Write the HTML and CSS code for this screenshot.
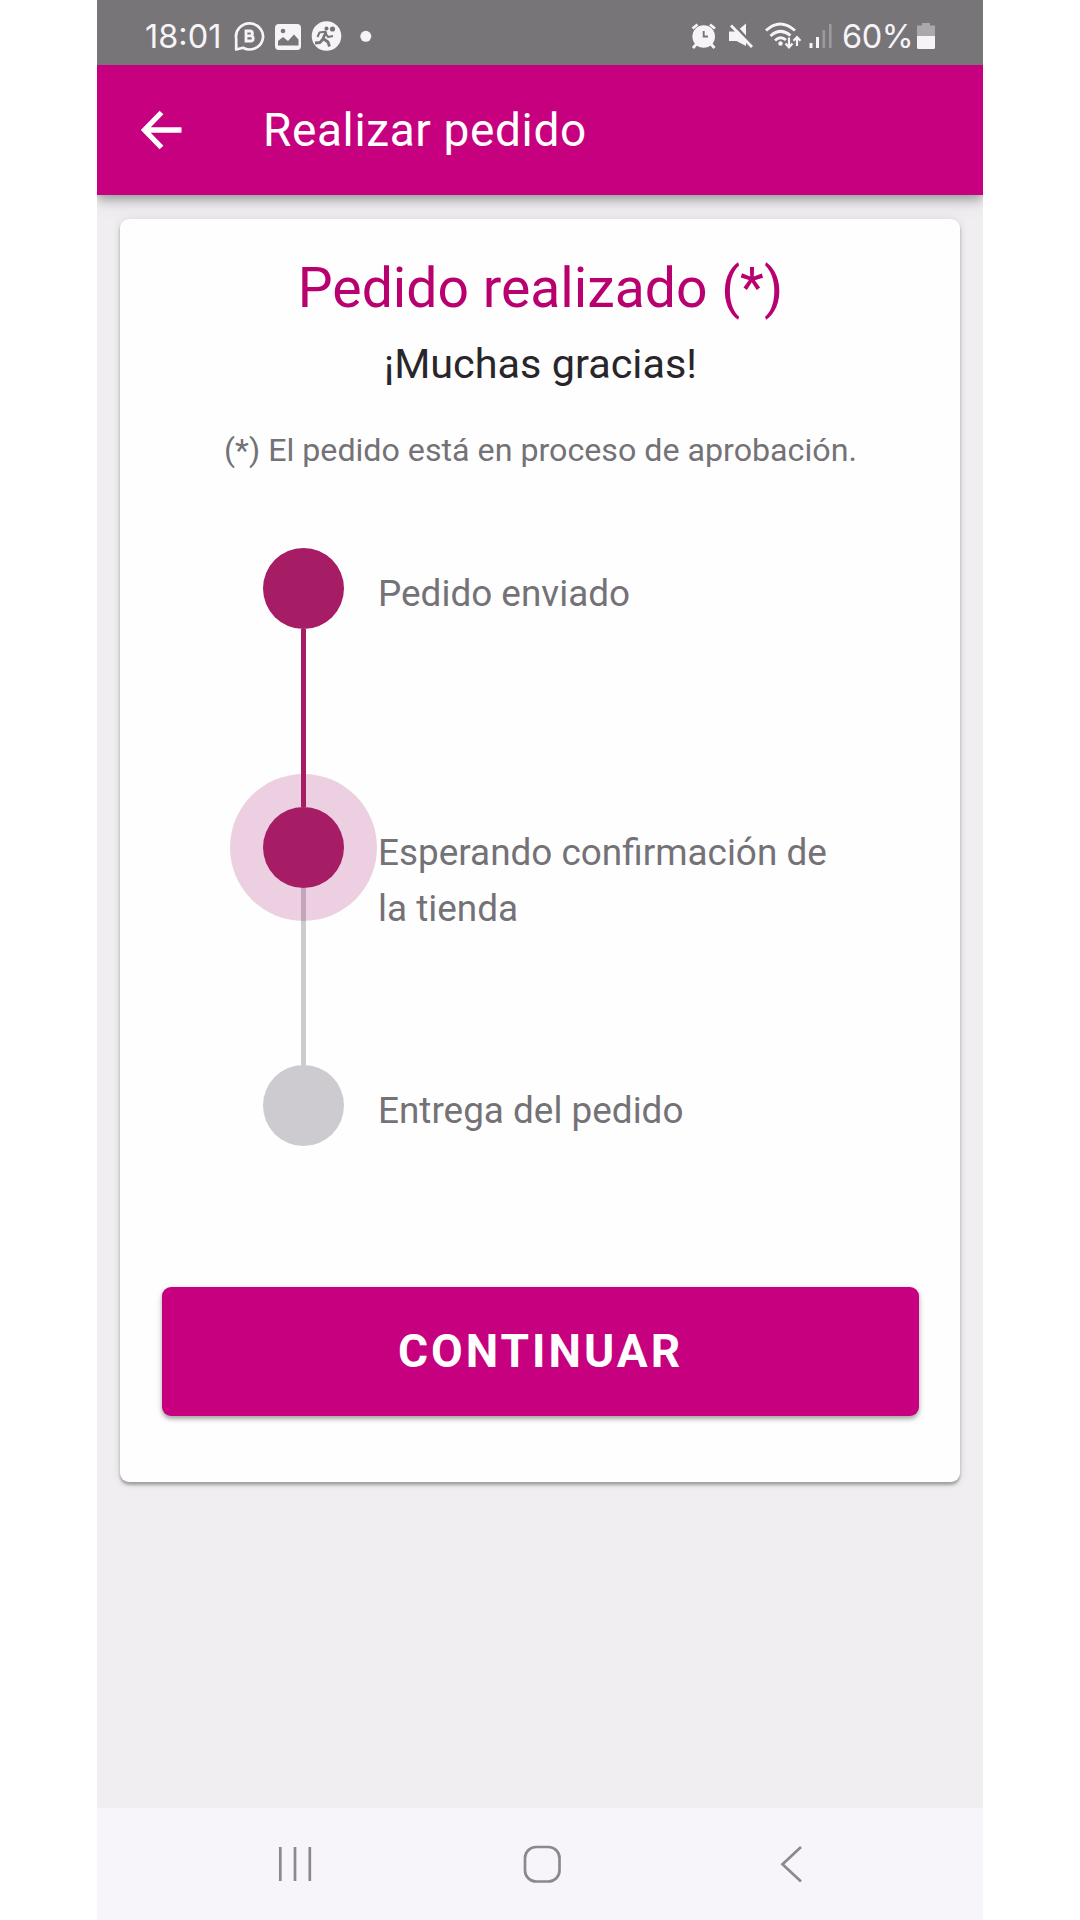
FILE: index.html
```html
<!DOCTYPE html>
<html lang="es">
<head>
<meta charset="utf-8">
<title>Realizar pedido</title>
<link rel="stylesheet" href="styles.css">
</head>
<body>
<div class="phone">
  <div class="status-bar">
    <span class="clock">18:01</span>
    <svg class="status-left" width="140" height="34" viewBox="232 19 140 34" fill="none">
      <path d="M236.200 49.500V38.500A13.500 13 0 1 1 243 47.800Z" stroke="#f6f4f7" stroke-width="2.700" stroke-linejoin="round"/>
      <path d="M246 31h4a2.400 2.400 0 0 1 0 4.800H246zM246 35.800h4.600a2.600 2.600 0 0 1 0 5.200H246z" stroke="#f6f4f7" stroke-width="2.800"/>
      <rect x="275" y="24" width="26" height="26" rx="4" fill="#f6f4f7"/>
      <path d="M278 45.500V41l5-4 5 4 6-6.500 4.500 5v6z" fill="#777578"/>
      <circle cx="283" cy="31" r="2.300" fill="#777578"/>
      <circle cx="326.500" cy="36" r="14.800" fill="#f6f4f7"/>
      <path d="M317.500 37l2-4.500 7-1M325.500 33l2.500 4 5-1" stroke="#777578" stroke-width="2" stroke-linejoin="round"/>
      <path d="M326 32l-3 6.500 5 3.500 1.500 4.500M323 39l-3 3.500-5 .5" stroke="#777578" stroke-width="2.800" stroke-linejoin="round"/>
      <circle cx="326.500" cy="28.500" r="2" fill="#777578"/>
      <circle cx="332.500" cy="29" r="2.600" fill="#777578"/>
      <circle cx="365.800" cy="36.300" r="5.500" fill="#f6f4f7"/>
    </svg>
    <svg class="status-right" width="146" height="34" viewBox="690 19 146 34" fill="none">
      <circle cx="703.700" cy="36.500" r="11.300" fill="#f6f4f7"/>
      <path d="M692.500 28.500l5-4M715 28.500l-5-4M696.500 44l-3.500 4M711 44l3.500 4" stroke="#f6f4f7" stroke-width="2.800"/>
      <path d="M703.700 31v5.500h4.300" stroke="#777578" stroke-width="1.900"/>
      <path d="M729 31.500h7.500l9.500-8v22.500L736.500 41H729z" fill="#f6f4f7"/>
      <path d="M733.500 24l20 22" stroke="#777578" stroke-width="3"/>
      <path d="M731 25.500l21 21.500" stroke="#f6f4f7" stroke-width="2.800"/>
      <path d="M766 30.500Q780 17.500 795 30.500M770.500 36Q780.500 27 790.500 35.500M775 40.500Q780.500 35.500 786 40" stroke="#f6f4f7" stroke-width="2.900"/>
      <circle cx="780.500" cy="43.500" r="2.200" fill="#f6f4f7"/>
      <path d="M789 37.500V47M785.500 43.500l3.500 3.800 3.500-3.800M797 46V37M793.500 40.800l3.500-3.800 3.500 3.800" stroke="#f6f4f7" stroke-width="2.200"/>
      <path d="M811 43v5M817.500 37v11" stroke="#f6f4f7" stroke-width="3"/>
      <path d="M823.800 30v18M830.300 24v24" stroke="#9c9a9d" stroke-width="2.600"/>
    </svg>
    <span class="percent">60%</span>
    <svg class="battery" width="20" height="28" viewBox="916 22 20 28">
      <path d="M922 23h8v2.500h5V37h-18V25.500h5z" fill="#aaa8ab"/>
      <path d="M917 36h18v11.500q0 1.500-1.500 1.500h-15q-1.500 0-1.500-1.500z" fill="#f6f4f7"/>
    </svg>
  </div>
  <header class="app-bar">
    <svg class="back" width="44" height="42" viewBox="0 0 44 42" fill="none" stroke="#fff" stroke-width="5.300">
      <path d="M41.500 21H5M21.500 3.500L4.500 21l17 17.500"/>
    </svg>
    <h1 class="app-title">Realizar pedido</h1>
  </header>
  <main class="content">
    <section class="card">
      <h2 class="heading">Pedido realizado (*)</h2>
      <p class="thanks">¡Muchas gracias!</p>
      <p class="note">(*) El pedido está en proceso de aprobación.</p>
      <ol class="steps">
        <li class="step done">
          <div class="track"><i class="dot"></i><i class="line"></i></div>
          <p class="label">Pedido enviado</p>
        </li>
        <li class="step current">
          <div class="track"><i class="dot"></i><i class="line"></i></div>
          <p class="label">Esperando confirmación de<br>la tienda</p>
        </li>
        <li class="step">
          <div class="track"><i class="dot"></i></div>
          <p class="label">Entrega del pedido</p>
        </li>
      </ol>
      <button class="continue" type="button">CONTINUAR</button>
    </section>
  </main>
  <nav class="nav-bar">
    <svg class="recents" width="34" height="38" viewBox="278 1845 34 38" fill="none" stroke="#8b898c" stroke-width="2.700"><path d="M280.300 1847v34M295 1847v34M309.800 1847v34"/></svg>
    <svg class="home" width="38" height="38" viewBox="523 1845 38 38" fill="none" stroke="#8b898c" stroke-width="2.700"><rect x="525" y="1847" width="34.500" height="34.500" rx="11"/></svg>
    <svg class="prev" width="24" height="38" viewBox="780 1845 24 38" fill="none" stroke="#8b898c" stroke-width="2.700"><path d="M801 1847l-18.500 17.300L801 1881.600"/></svg>
  </nav>
</div>
</body>
</html>
```
FILE: styles.css
```css
* { box-sizing: border-box; margin: 0; padding: 0; }
body { background: #fff; font-family: Roboto, sans-serif; }
svg { display: block; flex: none; }
.phone {
  width: 886px; height: 1920px; margin: 0 auto;
  display: flex; flex-direction: column;
  background: #f0eef1; overflow: hidden;
}
.status-bar {
  position: relative; z-index: 1;
  height: 65px; flex: none; display: flex; align-items: center;
  padding: 7px 47px 0 48px; background: #777578; color: #f6f4f7;
  font-family: Inter, sans-serif; font-size: 32.5px; line-height: 40px; white-space: nowrap;
}
.clock { width: 87px; padding-top: 1px; letter-spacing: 0; }
.status-right { margin-left: auto; }
.percent { width: 74px; margin-left: 6px; padding-top: 1px; letter-spacing: -.5px; }
.app-bar {
  height: 130px; flex: none; display: flex; align-items: center;
  padding-left: 43px; background: #c6007e; color: #fff;
  box-shadow: 0 4px 10px rgba(0, 0, 0, .32), 0 8px 20px rgba(0, 0, 0, .08);
}
.app-title { margin-left: 79px; font-size: 46px; font-weight: 400; letter-spacing: .62px; white-space: nowrap; }
.content { flex: 1; padding: 24px 23px 0; }
.card {
  height: 1263px; padding: 37px 41px 66px 42px; border-radius: 9px; background: #fefefe;
  box-shadow: 0 3px 3px rgba(0, 0, 0, .28), 0 1px 10px rgba(0, 0, 0, .12);
  text-align: center; white-space: nowrap;
}
.heading { font-size: 55.3px; line-height: 66px; font-weight: 400; color: #b8006f; }
.thanks { margin-top: 18px; font-size: 41.4px; line-height: 48px; color: #28262a; }
.note { margin-top: 38px; font-size: 32.2px; line-height: 48px; color: #747277; }
.steps { margin: 74px 0 141px 101px; list-style: none; text-align: left; }
.step { display: flex; gap: 34px; color: #747277; }
.track { position: relative; width: 81px; display: flex; flex-direction: column; align-items: center; }
.dot { width: 81px; height: 81px; border-radius: 50%; background: #cdcbcf; }
.line { width: 5px; height: 177.5px; background: #cdcbcf; }
.done .dot, .current .dot, .done .line { background: #a61c65; }
.label { padding-top: 18px; font-size: 36.9px; line-height: 56px; height: 81px; }
.current .track::before {
  content: ""; position: absolute; left: -33px; top: -33px;
  width: 147px; height: 147px; border-radius: 50%; background: rgba(156, 0, 95, .18);
}
.current .dot, .done .track { position: relative; z-index: 1; }
.continue {
  display: block; width: 100%; height: 129px; padding-bottom: 2px; border: 0; border-radius: 9px;
  background: #c6007e; color: #fff; font: 700 46px Roboto, sans-serif; letter-spacing: 3px;
  box-shadow: 0 3px 4px rgba(0, 0, 0, .3), 0 2px 10px rgba(0, 0, 0, .08);
}
.nav-bar {
  height: 112px; flex: none; display: flex; align-items: center;
  padding-left: 181px; background: #f7f5f9;
}
.home { margin: 0 219px 0 211px; }
```
